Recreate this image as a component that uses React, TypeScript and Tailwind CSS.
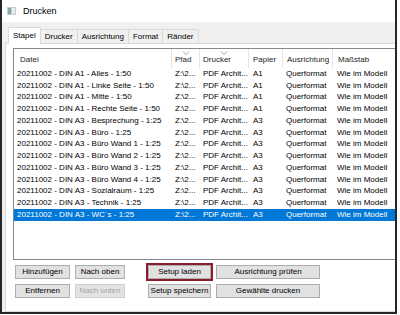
import { ReactNode } from 'react'

type Row = { datei: string; papier: string }

const rows: Row[] = [
  { datei: '20211002 - DIN A1 - Alles - 1:50', papier: 'A1' },
  { datei: '20211002 - DIN A1 - Linke Seite - 1:50', papier: 'A1' },
  { datei: '20211002 - DIN A1 - Mitte - 1:50', papier: 'A1' },
  { datei: '20211002 - DIN A1 - Rechte Seite - 1:50', papier: 'A1' },
  { datei: '20211002 - DIN A3 - Besprechung - 1:25', papier: 'A3' },
  { datei: '20211002 - DIN A3 - Büro - 1:25', papier: 'A3' },
  { datei: '20211002 - DIN A3 - Büro Wand 1 - 1:25', papier: 'A3' },
  { datei: '20211002 - DIN A3 - Büro Wand 2 - 1:25', papier: 'A3' },
  { datei: '20211002 - DIN A3 - Büro Wand 3 - 1:25', papier: 'A3' },
  { datei: '20211002 - DIN A3 - Büro Wand 4 - 1:25', papier: 'A3' },
  { datei: '20211002 - DIN A3 - Sozialraum - 1:25', papier: 'A3' },
  { datei: '20211002 - DIN A3 - Technik - 1:25', papier: 'A3' },
  { datei: '20211002 - DIN A3 - WC´s - 1:25', papier: 'A3' },
]

const tabs = ['Stapel', 'Drucker', 'Ausrichtung', 'Format', 'Ränder']

function SortChevron() {
  return (
    <svg className="absolute top-[2px] left-1/2 -translate-x-1/2" width="7" height="4" viewBox="0 0 7 4">
      <polyline points="0.5,0.5 3.5,3.5 6.5,0.5" fill="none" stroke="#a0a0a0" strokeWidth="1" />
    </svg>
  )
}

function HeaderCell({ w, children, sort, pl = 'pl-[3px]' }: { w: string; children: ReactNode; sort?: boolean; pl?: string }) {
  return (
    <div className={`relative ${w} ${pl} h-full flex items-center pt-[3px] border-r border-[#e5e5e5] shrink-0`}>
      {sort && <SortChevron />}
      {children}
    </div>
  )
}

function Button({ w, children, disabled }: { w: string; children: ReactNode; disabled?: boolean }) {
  return (
    <div
      className={`${w} h-[14px] flex items-center justify-center border shrink-0 ${
        disabled ? 'bg-[#e3e3e3] border-[#cfcfcf] text-[#a3a3a3]' : 'bg-[#e1e1e1] border-[#adadad] text-black'
      }`}
    >
      {children}
    </div>
  )
}

export default function App() {
  return (
    <div className="w-[400px] h-[315px] bg-white overflow-hidden" style={{ fontFamily: '"Liberation Sans", Arial, sans-serif' }}>
      <div className="w-[397px] h-[314px] border-x-2 border-b-2 border-[#262626] flex flex-col bg-[#f0f0f0]">
        {/* Title bar */}
        <div className="h-[22px] bg-white flex items-center pl-[5px] gap-[7px] shrink-0">
          <svg width="9" height="8" viewBox="0 0 9 8">
            <rect x="0" y="0" width="9" height="8" fill="#c8ccd0" />
            <rect x="1" y="1" width="3" height="6" fill="#7fa8a8" />
            <rect x="5" y="1" width="3" height="6" fill="#e8eaec" />
          </svg>
          <span className="text-[9px] text-black leading-none">Drucken</span>
        </div>

        {/* Body */}
        <div className="flex-1 flex flex-col pl-[3px] pt-[5px]">
          {/* Tabs */}
          <div className="h-[16px] flex items-end pl-[3px] text-[8px] text-black relative z-10">
            {tabs.map((t, i) =>
              i === 0 ? (
                <div key={t} className="h-[17px] -mb-[1px] px-[4px] bg-white border border-b-0 border-[#d9d9d9] flex items-center">
                  {t}
                </div>
              ) : (
                <div key={t} className="h-[14px] px-[4px] border border-l-0 border-b-0 border-[#d9d9d9] flex items-center">
                  {t}
                </div>
              )
            )}
          </div>

          {/* Tab panel */}
          <div className="flex-1 bg-white border border-r-0 border-[#d9d9d9] pl-[7px] pt-[4px] flex flex-col">
            {/* List view */}
            <div className="h-[212px] border border-r-0 border-[#828790] bg-white flex flex-col text-[8px] text-black overflow-hidden">
              <div className="h-[19px] flex text-[#1e1e1e] shrink-0">
                <HeaderCell w="w-[158px]" pl="pl-[6px]">Datei</HeaderCell>
                <HeaderCell w="w-[28px]" sort>Pfad</HeaderCell>
                <HeaderCell w="w-[49px]" sort>Drucker</HeaderCell>
                <HeaderCell w="w-[34px]" pl="pl-[4px]">Papier</HeaderCell>
                <HeaderCell w="w-[50px]" pl="pl-[4px]">Ausrichtung</HeaderCell>
                <div className="pl-[5px] h-full flex items-center pt-[3px]">Maßstab</div>
              </div>
              {rows.map((r, i) => {
                const sel = i === rows.length - 1
                return (
                  <div
                    key={r.datei}
                    className={`h-[11.75px] flex items-center whitespace-nowrap shrink-0 ${sel ? 'bg-[#0078d7] text-white' : ''}`}
                  >
                    <div className="w-[158px] pl-[3px] shrink-0">{r.datei}</div>
                    <div className="w-[28px] pl-[3px] shrink-0">Z:\2...</div>
                    <div className="w-[49px] pl-[3px] shrink-0">PDF Archit...</div>
                    <div className="w-[34px] pl-[4px] shrink-0">{r.papier}</div>
                    <div className="w-[50px] pl-[3px] shrink-0">Querformat</div>
                    <div className="pl-[4px]">Wie im Modell</div>
                  </div>
                )
              })}
            </div>

            {/* Buttons */}
            <div className="flex flex-col text-[8px] mt-[3px] gap-[3px]">
              <div className="flex items-center pl-[2px]">
                <Button w="w-[55px]">Hinzufügen</Button>
                <div className="ml-[5px]">
                  <Button w="w-[50px]">Nach oben</Button>
                </div>
                <div className="ml-[21px] border-2 border-[#8c1d2e] shrink-0">
                  <Button w="w-[63px]">Setup laden</Button>
                </div>
                <div className="ml-[3px]">
                  <Button w="w-[104px]">Ausrichtung prüfen</Button>
                </div>
              </div>
              <div className="flex items-center pl-[2px]">
                <Button w="w-[55px]">Entfernen</Button>
                <div className="ml-[5px]">
                  <Button w="w-[50px]" disabled>Nach unten</Button>
                </div>
                <div className="ml-[23px]">
                  <Button w="w-[63px]">Setup speichern</Button>
                </div>
                <div className="ml-[5px]">
                  <Button w="w-[104px]">Gewählte drucken</Button>
                </div>
              </div>
            </div>
          </div>
        </div>
      </div>
    </div>
  )
}
